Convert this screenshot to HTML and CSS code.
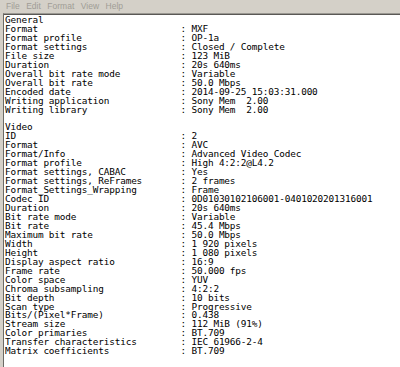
FILE: index.html
```
<!DOCTYPE html>
<html lang="en">
<head>
    <meta charset="UTF-8">
    <title>MediaInfo - Notepad</title>
    <link rel="stylesheet" href="styles.css">
</head>
<body>
<div class="window">
    <div class="menubar">
        <span class="menu-item">File</span>
        <span class="menu-item">Edit</span>
        <span class="menu-item">Format</span>
        <span class="menu-item">View</span>
        <span class="menu-item">Help</span>
    </div>

    <!-- text area -->
    <div class="editor">
<pre class="text">General
Format                          : MXF
Format profile                  : OP-1a
Format settings                 : Closed / Complete
File size                       : 123 MiB
Duration                        : 20s 640ms
Overall bit rate mode           : Variable
Overall bit rate                : 50.0 Mbps
Encoded date                    : 2014-09-25 15:03:31.000
Writing application             : Sony Mem  2.00
Writing library                 : Sony Mem  2.00

Video
ID                              : 2
Format                          : AVC
Format/Info                     : Advanced Video Codec
Format profile                  : High 4:2:2@L4.2
Format settings, CABAC          : Yes
Format settings, ReFrames       : 2 frames
Format_Settings_Wrapping        : Frame
Codec ID                        : 0D01030102106001-0401020201316001
Duration                        : 20s 640ms
Bit rate mode                   : Variable
Bit rate                        : 45.4 Mbps
Maximum bit rate                : 50.0 Mbps
Width                           : 1 920 pixels
Height                          : 1 080 pixels
Display aspect ratio            : 16:9
Frame rate                      : 50.000 fps
Color space                     : YUV
Chroma subsampling              : 4:2:2
Bit depth                       : 10 bits
Scan type                       : Progressive
Bits/(Pixel*Frame)              : 0.438
Stream size                     : 112 MiB (91%)
Color primaries                 : BT.709
Transfer characteristics        : IEC 61966-2-4
Matrix coefficients             : BT.709</pre>
    </div>
</div>
</body>
</html>
```

FILE: styles.css
```
body {
    margin: 0;
    padding: 0;
    background-color: #d4d0c8;
    overflow: hidden;
}

.window {
    width: 400px;
    height: 367px;
    display: flex;
    flex-direction: column;
}

.menubar {
    height: 13px;
    display: flex;
    align-items: center;
    padding-left: 6px;
    gap: 6.5px;
    font-family: "Liberation Sans", Arial, sans-serif;
    font-size: 8.5px;
    color: #a09d96;
}

.menu-item {
    line-height: 11px;
}

.editor {
    flex: 1;
    margin-left: 3px;
    background-color: #ffffff;
    border-top: 1px solid #9a9892;
    border-left: 1px solid #6c6a66;
    box-shadow: inset 0 1px 0 #5a5855;
    overflow: hidden;
}

.text {
    margin: 0;
    padding: 2px 0 0 1px;
    font-family: "DejaVu Sans Mono", monospace;
    font-size: 9.4px;
    letter-spacing: -0.16px;
    line-height: 8.95px;
    color: #000000;
    white-space: pre;
}
```
